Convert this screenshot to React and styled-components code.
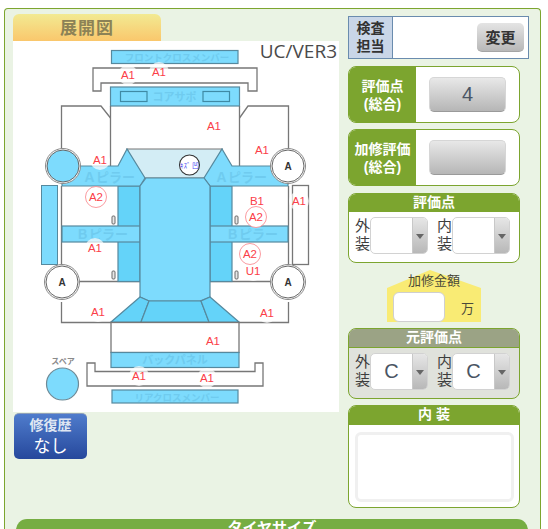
import React from "react";
import styled, { createGlobalStyle } from "styled-components";

const GlobalStyle = createGlobalStyle`
  html, body {
    margin: 0;
    height: 529px;
    overflow: hidden;
    background: #ffffff;
    font-family: "Liberation Sans", "Noto Sans CJK JP", sans-serif;
  }
`;

const Panel = styled.div`
  box-sizing: border-box;
  width: 537px;
  height: 540px;
  margin: 8px 0 0 4px;
  padding: 5px 0 0 8px;
  background: #eaf3e4;
  border: 1.5px solid #7ca52f;
  border-bottom: 0;
  border-radius: 4px 4px 0 0;
`;

const Columns = styled.div`
  display: flex;
  align-items: flex-start;
  gap: 9px;
  height: 497px;
`;

const LeftColumn = styled.div`
  width: 326px;
`;

const TabTitle = styled.div`
  width: 148px;
  height: 27px;
  border-radius: 6px 6px 0 0;
  background: linear-gradient(to bottom, #f2ea92, #fac76c);
  color: #8c8256;
  font-size: 17px;
  font-weight: bold;
  line-height: 29px;
  text-align: center;
  letter-spacing: 1px;
`;

const DiagramBox = styled.div`
  position: relative;
  width: 326px;
  height: 371px;
  background: #ffffff;
`;

const Version = styled.span`
  position: absolute;
  top: -3px;
  right: 2px;
  font-family: "Open Sans", sans-serif;
  font-size: 19px;
  color: #4a4a4a;
`;

const RepairButton = styled.div`
  width: 73px;
  height: 46px;
  margin: 1px 0 0 1px;
  border-radius: 5px;
  background: linear-gradient(to bottom, #4f7ccc, #26489c);
  border-top: 1px solid #8f9fb8;
  box-sizing: border-box;
  color: #ffffff;
  text-align: center;
  padding-top: 1px;
  font-size: 14px;
  line-height: 20px;

  b {
    display: block;
    color: #dfe6f2;
  }

  span {
    display: block;
    font-size: 17px;
    line-height: 23px;
  }
`;

const RightColumn = styled.div`
  width: 181px;
  display: flex;
  flex-direction: column;
  margin-top: 2px;
`;

const InspectorRow = styled.div`
  box-sizing: border-box;
  display: flex;
  align-items: center;
  width: 181px;
  height: 43px;
  background: #ffffff;
  border: 1px solid #6a8cae;
`;

const InspectorLabel = styled.div`
  box-sizing: border-box;
  width: 44px;
  height: 100%;
  background: #c9d6e8;
  border-right: 1px solid #6a8cae;
  color: #333333;
  font-size: 14px;
  font-weight: bold;
  line-height: 18px;
  text-align: center;
  padding-top: 2px;
`;

const ChangeButton = styled.div`
  width: 47px;
  height: 29px;
  margin-left: auto;
  margin-right: 4px;
  border-radius: 5px;
  background: linear-gradient(to bottom, #e4e4e4, #b8b8b8);
  border-bottom: 1px solid #a5a5a5;
  box-sizing: border-box;
  color: #333333;
  font-size: 15px;
  font-weight: bold;
  line-height: 29px;
  text-align: center;
`;

const ScoreBox = styled.div`
  box-sizing: border-box;
  display: flex;
  align-items: center;
  width: 172px;
  height: 57px;
  margin-top: ${(p) => p.$top}px;
  background: #ffffff;
  border: 1px solid #7ca52f;
  border-radius: 8px;
  overflow: hidden;
`;

const ScoreLabel = styled.div`
  width: 67px;
  height: 100%;
  flex: none;
  display: flex;
  flex-direction: column;
  justify-content: center;
  background: #7ca52f;
  color: #ffffff;
  font-size: 14px;
  font-weight: bold;
  line-height: 18px;
  text-align: center;
  white-space: nowrap;
`;

const ScoreValue = styled.div`
  box-sizing: border-box;
  width: 77px;
  height: 35px;
  margin-left: 13px;
  border-radius: 5px;
  background: linear-gradient(to bottom, #e8e8e8, #b6b6b6);
  border: 1px solid #d6d6d6;
  border-bottom: 1px solid #9a9a9a;
  color: #4a5564;
  font-size: 20px;
  line-height: 33px;
  text-align: center;
`;

const Section = styled.div`
  box-sizing: border-box;
  width: 172px;
  height: ${(p) => p.$height}px;
  margin-top: ${(p) => p.$top}px;
  background: ${(p) => (p.$muted ? "#e0e2dc" : "#ffffff")};
  border: 1px solid #7ca52f;
  border-radius: 8px;
  overflow: hidden;
`;

const SectionHeader = styled.div`
  box-sizing: border-box;
  height: ${(p) => p.$height || 19}px;
  margin: -1px -1px 0;
  background: ${(p) => (p.$muted ? "#9ba385" : "#7ca52f")};
  ${(p) => p.$muted && "border-bottom: 1px solid #7ca52f;"}
  color: #ffffff;
  font-size: 14px;
  font-weight: bold;
  line-height: 19px;
  text-align: center;
`;

const GradeRow = styled.div`
  display: flex;
  padding: 5px 0 0 6px;
`;

const GradeLabel = styled.div`
  width: 15px;
  font-size: 15px;
  line-height: 18px;
  color: #3d3d3d;
`;

const GradeSelect = styled.div`
  box-sizing: border-box;
  display: flex;
  width: 58px;
  height: 37px;
  margin-right: ${(p) => p.$gap}px;
  border: 1px solid #d2d2d2;
  border-radius: 5px;
  background: #ffffff;
  overflow: hidden;
`;

const GradeValue = styled.div`
  flex: 1;
  color: #4a5564;
  font-size: 20px;
  line-height: 35px;
  text-align: center;
`;

const GradeArrow = styled.div`
  position: relative;
  width: 14px;
  background: linear-gradient(to bottom, #e6e6e6, #b8b8b8);
  border-left: 1px solid #c8c8c8;

  &::after {
    content: "";
    position: absolute;
    left: 3px;
    top: 16px;
    border: 4px solid transparent;
    border-top: 5px solid #666666;
    border-bottom: 0;
  }
`;

const AmountTag = styled.div`
  position: relative;
  box-sizing: border-box;
  align-self: flex-start;
  width: 94px;
  height: 52px;
  margin: 7px 0 6px 39px;
  padding-top: 3px;

  &::before {
    content: "";
    position: absolute;
    inset: 0;
    background: #f9eb74;
    clip-path: polygon(0 18px, 43px 0, 94px 18px, 94px 52px, 0 52px);
  }
`;

const AmountTitle = styled.div`
  position: relative;
  font-size: 13px;
  line-height: 16px;
  color: #4a4a3a;
  text-align: center;
  white-space: nowrap;
`;

const AmountRow = styled.div`
  position: relative;
  display: flex;
  align-items: center;
  padding: 3px 0 0 6px;
  color: #4a4a3a;
  font-size: 13px;
`;

const AmountInput = styled.div`
  box-sizing: border-box;
  width: 52px;
  height: 30px;
  margin-right: 16px;
  background: #ffffff;
  border: 1px solid #cfcfcf;
  border-radius: 6px;
`;

const NotesBox = styled.div`
  box-sizing: border-box;
  width: 159px;
  height: 70px;
  margin: 7px 0 0 6px;
  background: #ffffff;
  border: 3px solid #f0f0f0;
  border-radius: 6px;
`;

const TireBar = styled.div`
  width: 512px;
  height: 40px;
  margin: 8px 0 0 3px;
  background: #76ad42;
  border-radius: 11px 11px 0 0;
  color: #ffffff;
  font-size: 15px;
  font-weight: bold;
  line-height: 17px;
  text-align: center;
`;

const BLUE = "#7ddbfd";
const DEEP = "#64d3f9";
const EDGE = "#56899e";
const GRAY = "#777777";
const RED = "#fb4048";

const PartRect = ({ x, y, w, h, fill = BLUE, stroke = EDGE }) => (
  <rect x={x} y={y} width={w} height={h} fill={fill} stroke={stroke} strokeWidth="1.2" />
);

const PartLabel = ({ x, y, size = 10, children }) => (
  <text x={x} y={y} fontSize={size} fontWeight="bold" fill="#6fcbef" textAnchor="middle"
    fontFamily="'Noto Sans CJK JP', sans-serif">
    {children}
  </text>
);

const Mark = ({ x, y, children }) => (
  <g>
    <circle cx={x} cy={y} r="10" fill="#ffffff" opacity="0.7" />
    <text x={x} y={y + 4} fontSize="11.5" fill={RED} textAnchor="middle"
      fontFamily="'Liberation Sans', sans-serif">
      {children}
    </text>
  </g>
);

const RingMark = ({ x, y, children }) => (
  <g>
    <circle cx={x} cy={y} r="10.5" fill="#ffffff" stroke="#f98288" strokeWidth="0.8" />
    <text x={x} y={y + 4} fontSize="11.5" fill={RED} textAnchor="middle"
      fontFamily="'Liberation Sans', sans-serif">
      {children}
    </text>
  </g>
);

const Wheel = ({ x, y, fill = "#ffffff", label }) => (
  <g>
    <circle cx={x} cy={y} r="17.5" fill="#ffffff" stroke="#8a8a8a" strokeWidth="1" />
    <circle cx={x} cy={y} r="16" fill={fill} stroke="#666666" strokeWidth="1" />
    {label && (
      <text x={x} y={y + 3.5} fontSize="10" fontWeight="bold" fill="#333333" textAnchor="middle"
        fontFamily="'Liberation Sans', sans-serif">
        {label}
      </text>
    )}
  </g>
);

const Handle = ({ x, y }) => (
  <rect x={x} y={y} width="3" height="8" rx="1" fill="#e8e8e8" stroke="#6a6a6a" strokeWidth="1" />
);

const MARKS = [
  [128, 75, "A1"], [159, 72, "A1"], [214, 126, "A1"], [100, 160, "A1"], [262, 150, "A1"],
  [299, 201, "A1"], [257, 201, "B1"], [95, 248, "A1"], [253, 271, "U1"], [98, 312, "A1"],
  [267, 313, "A1"], [213, 341, "A1"], [139, 376, "A1"], [207, 378, "A1"],
];

const Diagram = () => (
  <svg width="326" height="371" viewBox="13 41 326 371" style={{ display: "block" }}>
    <PartRect x={111.5} y={50.5} w={126.5} h={13} />
    <PartLabel x={177} y={61} size={9.5}>フロントクロスメンバー</PartLabel>
    <path d="M93 68H257V91H248V83H101V91H93Z" fill="#ffffff" stroke={GRAY} strokeWidth="1.3" />
    <PartRect x={110.5} y={87} w={129} h={19} />
    <PartRect x={120.5} y={91.5} w={26.5} h={10} stroke="#3f8aa5" />
    <PartRect x={203} y={91.5} w={26.5} h={10} stroke="#3f8aa5" />
    <PartLabel x={174.5} y={101} size={11}>コアサポ</PartLabel>

    <path d="M110.5 106V170M239.5 106V170" fill="none" stroke={GRAY} strokeWidth="1.3" />
    <path d="M61.5 150V106H101L110.5 118" fill="none" stroke={GRAY} strokeWidth="1.3" />
    <path d="M288.5 150V106H248L239.5 118" fill="none" stroke={GRAY} strokeWidth="1.3" />

    <rect x="41.5" y="185.5" width="16" height="79" fill={BLUE} stroke={EDGE} strokeWidth="1" />
    <rect x="292.5" y="185.5" width="16" height="79" fill="#ffffff" stroke={GRAY} strokeWidth="1.3" />

    <path d="M61.5 186V265M288.5 186V265" fill="none" stroke={GRAY} strokeWidth="1.3" />
    <path d="M62 281.5H140M210 281.5H288" fill="none" stroke={GRAY} strokeWidth="1.3" />

    <PartRect x={118} y={186} w={22} h={95.5} fill={DEEP} />
    <PartRect x={210} y={186} w={22} h={95.5} fill={DEEP} />
    <PartRect x={62} y={226} w={78} h={16} />
    <PartRect x={210} y={226} w={78} h={16} />
    <PartLabel x={102} y={239} size={13}>Ｂピラー</PartLabel>
    <PartLabel x={252} y={239} size={13}>Ｂピラー</PartLabel>
    <Handle x={112} y={216} />
    <Handle x={235} y={216} />
    <Handle x={112} y={271} />
    <Handle x={235} y={271} />

    <path d="M127 149H222L208 178H141Z" fill="#d3edf5" stroke={GRAY} strokeWidth="1.2" />
    <path d="M62 166H118L127 149L145 178L140 186H62Z" fill={BLUE} stroke={EDGE} strokeWidth="1.2" />
    <path d="M288 166H232L222 149L204 178L210 186H288Z" fill={BLUE} stroke={EDGE} strokeWidth="1.2" />
    <PartLabel x={109} y={182} size={13}>Ａピラー</PartLabel>
    <PartLabel x={241} y={182} size={13}>Ａピラー</PartLabel>

    <path d="M140 186L146 178H204L210 186V297L200 301H149L140 297Z" fill={BLUE} stroke={EDGE} strokeWidth="1.2" />
    <path d="M111 322L140 297L149 301L141 322Z" fill={DEEP} stroke={EDGE} strokeWidth="1.2" />
    <path d="M149 301H201L209 322H141Z" fill={DEEP} stroke={EDGE} strokeWidth="1.2" />
    <path d="M239 322L210 297L201 301L209 322Z" fill={DEEP} stroke={EDGE} strokeWidth="1.2" />

    <path d="M61.5 302V322.5H111M288.5 302V322.5H239" fill="none" stroke={GRAY} strokeWidth="1.3" />
    <rect x="111" y="322.5" width="128" height="30" fill="#ffffff" stroke={GRAY} strokeWidth="1.3" />
    <PartRect x={111} y={352.5} w={128} h={15} />
    <PartLabel x={175} y={364} size={11}>バックパネル</PartLabel>
    <path d="M87 363H95V371.5H255V363H263V386H87Z" fill="#ffffff" stroke={GRAY} strokeWidth="1.3" />
    <PartRect x={112} y={390} w={126} h={13} />
    <PartLabel x={177} y={401} size={9.5}>リアクロスメンバー</PartLabel>

    <Wheel x={63} y={166} fill={BLUE} />
    <Wheel x={288} y={166} label="A" />
    <Wheel x={62} y={282} label="A" />
    <Wheel x={288} y={282} label="A" />

    <text x={63} y={364} fontSize="8" fontWeight="bold" fill="#8a8a8a" textAnchor="middle"
      fontFamily="'Noto Sans CJK JP', sans-serif">
      スペア
    </text>
    <circle cx="62.5" cy="384" r="16" fill={BLUE} stroke="#6f8a96" strokeWidth="1.2" />

    <circle cx="189.5" cy="165" r="10" fill="#ffffff" stroke="#333333" strokeWidth="1.1" />
    <text x={189.5} y={168} fontSize="7" fill="#4a4af0" textAnchor="middle"
      fontFamily="'Noto Sans CJK JP', sans-serif">
      ｷｽﾞ 凹
    </text>

    {MARKS.map(([x, y, t]) => (
      <Mark key={`${x}-${y}`} x={x} y={y}>{t}</Mark>
    ))}
    <RingMark x={96} y={197}>A2</RingMark>
    <RingMark x={256} y={217}>A2</RingMark>
    <RingMark x={250} y={254}>A2</RingMark>
  </svg>
);

const GradeFields = ({ outer, inner }) => (
  <GradeRow>
    <GradeLabel>外<br />装</GradeLabel>
    <GradeSelect $gap={9}>
      <GradeValue>{outer}</GradeValue>
      <GradeArrow />
    </GradeSelect>
    <GradeLabel>内<br />装</GradeLabel>
    <GradeSelect $gap={0}>
      <GradeValue>{inner}</GradeValue>
      <GradeArrow />
    </GradeSelect>
  </GradeRow>
);

export default function App() {
  return (
    <>
      <GlobalStyle />
      <Panel>
        <Columns>
          <LeftColumn>
            <TabTitle>展開図</TabTitle>
            <DiagramBox>
              <Diagram />
              <Version>UC/VER3</Version>
            </DiagramBox>
            <RepairButton>
              <b>修復歴</b>
              <span>なし</span>
            </RepairButton>
          </LeftColumn>
          <RightColumn>
            <InspectorRow>
              <InspectorLabel>検査<br />担当</InspectorLabel>
              <ChangeButton>変更</ChangeButton>
            </InspectorRow>
            <ScoreBox $top={7}>
              <ScoreLabel>評価点<br />(総合)</ScoreLabel>
              <ScoreValue>4</ScoreValue>
            </ScoreBox>
            <ScoreBox $top={6}>
              <ScoreLabel>加修評価<br />(総合)</ScoreLabel>
              <ScoreValue />
            </ScoreBox>
            <Section $height={70} $top={7}>
              <SectionHeader>評価点</SectionHeader>
              <GradeFields />
            </Section>
            <AmountTag>
              <AmountTitle>加修金額</AmountTitle>
              <AmountRow>
                <AmountInput />
                万
              </AmountRow>
            </AmountTag>
            <Section $height={71} $top={0} $muted>
              <SectionHeader $muted $height={20}>元評価点</SectionHeader>
              <GradeFields outer="C" inner="C" />
            </Section>
            <Section $height={103} $top={6}>
              <SectionHeader $height={20}>内 装</SectionHeader>
              <NotesBox />
            </Section>
          </RightColumn>
        </Columns>
        <TireBar>タイヤサイズ</TireBar>
      </Panel>
    </>
  );
}
